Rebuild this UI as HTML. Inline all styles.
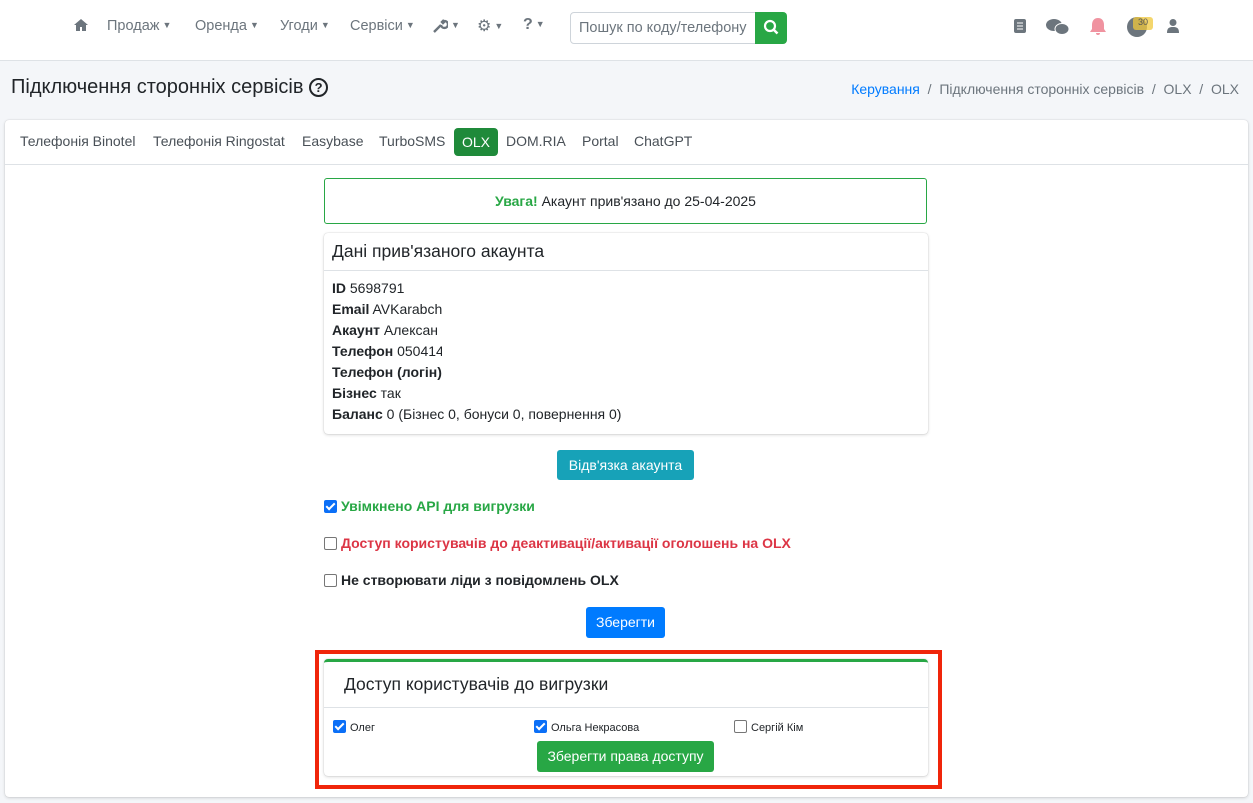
<!DOCTYPE html>
<html><head><meta charset="utf-8"><style>
*{box-sizing:border-box;margin:0;padding:0}
body{width:1253px;height:803px;overflow:hidden;background:#f4f6f9;font-family:"Liberation Sans",sans-serif;color:#212529;font-size:14px;position:relative}
.a{position:absolute}
.nav{left:0;top:0;width:1253px;height:61px;background:#fff;border-bottom:1px solid #dee2e6}
.ni{position:absolute;top:18px;color:#6c757d;font-size:14.5px}
.ni .c{font-size:9px;margin-left:3px;vertical-align:2px}
.card{left:5px;top:120px;width:1243px;height:677px;background:#fff;border-radius:4px;box-shadow:0 0 1px rgba(0,0,0,.2),0 1px 3px rgba(0,0,0,.15)}
.tab{position:absolute;top:133px;color:#495057;font-size:14px}
.chk{display:inline-block;width:13px;height:13px;border-radius:2px;vertical-align:-2px;margin-right:4px}
.on{background:#0b6ff7;position:relative}
.on:after{content:"";position:absolute;left:4px;top:1px;width:3px;height:7px;border:solid #fff;border-width:0 2px 2px 0;transform:rotate(45deg)}
.off{border:1px solid #767676;background:#fff}
b{font-weight:bold}
</style></head><body>
<div class="a nav">
<svg class="a" style="left:73px;top:18px" width="16" height="14" viewBox="0 0 16 14"><path d="M8 1L1 7h2v6h4V9h2v4h4V7h2z" fill="#6c757d"/></svg>
<span class="ni" style="left:107px">Продаж<span class="c">▼</span></span>
<span class="ni" style="left:195px">Оренда<span class="c">▼</span></span>
<span class="ni" style="left:280px">Угоди<span class="c">▼</span></span>
<span class="ni" style="left:350px">Сервіси<span class="c">▼</span></span>
<svg class="a" style="left:432px;top:18px" width="16" height="16"><path d="M2 14l7-7M9 7a3.5 3.5 0 104-4l-2 2-1-1 2-2" stroke="#6c757d" stroke-width="2.4" fill="none"/></svg>
<span class="ni" style="left:448px"><span class="c">▼</span></span>
<span class="ni" style="left:477px;font-size:16px;top:16px">⚙<span class="c">▼</span></span>
<span class="ni" style="left:523px;font-weight:bold;font-size:16px;top:16px">?<span class="c">▼</span></span>
<div class="a" style="left:570px;top:12px;width:186px;height:32px;border:1px solid #ced4da;border-radius:4px 0 0 4px;color:#6c757d;font-size:14.5px;padding:7px 8px">Пошук по коду/телефону</div>
<div class="a" style="left:755px;top:12px;width:32px;height:32px;background:#28a745;border-radius:0 4px 4px 0"><svg width="32" height="32"><circle cx="15" cy="14" r="5" stroke="#fff" stroke-width="2.2" fill="none"/><path d="M18.5 17.5l4 4" stroke="#fff" stroke-width="2.5"/></svg></div>
<svg class="a" style="left:1013px;top:18px" width="14" height="16"><rect x="1" y="1" width="12" height="14" rx="2" fill="#6c757d"/><path d="M4 5h6M4 8h6M4 11h6" stroke="#fff"/></svg>
<svg class="a" style="left:1045px;top:17px" width="26" height="20"><ellipse cx="9" cy="8" rx="8" ry="6" fill="#6c757d"/><ellipse cx="17" cy="12" rx="7" ry="5.5" fill="#6c757d" stroke="#fff"/></svg>
<svg class="a" style="left:1088px;top:16px" width="20" height="22"><path d="M10 2c-4 0-6 3-6 7v4l-2 3h16l-2-3V9c0-4-2-7-6-7z M8 17a2 2 0 004 0z" fill="#f093a0"/></svg>
<div class="a" style="left:1127px;top:17px;width:20px;height:20px;border-radius:50%;background:#6c757d"></div>
<div class="a" style="left:1133px;top:17px;width:20px;height:13px;background:rgba(240,200,60,.75);border-radius:3px;font-size:9px;color:#555;text-align:center">30</div>
<svg class="a" style="left:1166px;top:18px" width="14" height="16"><circle cx="7" cy="4.5" r="3.5" fill="#6c757d"/><path d="M1 15c0-5 2-6 6-6s6 1 6 6z" fill="#6c757d"/></svg>
</div>
<div class="a" style="left:11px;top:76px;font-size:20px;color:#212529">Підключення сторонніх сервісів <span style="display:inline-block;width:19px;height:19px;border:2px solid #212529;border-radius:50%;font-size:13px;text-align:center;line-height:15px;font-weight:bold;vertical-align:1px">?</span></div>
<div class="a" style="right:14px;top:81px;font-size:14px;color:#6c757d"><span style="color:#007bff">Керування</span> &nbsp;/&nbsp; Підключення сторонніх сервісів &nbsp;/&nbsp; OLX &nbsp;/&nbsp; OLX</div>
<div class="a card"></div>
<div class="a" style="left:5px;top:164px;width:1243px;border-top:1px solid #dee2e6"></div>
<span class="tab" style="left:20px">Телефонія Binotel</span>
<span class="tab" style="left:153px">Телефонія Ringostat</span>
<span class="tab" style="left:302px">Easybase</span>
<span class="tab" style="left:379px">TurboSMS</span>
<div class="a" style="left:454px;top:128px;width:44px;height:28px;background:#1f8a3a;border-radius:4px;color:#fff;text-align:center;line-height:28px">OLX</div>
<span class="tab" style="left:506px">DOM.RIA</span>
<span class="tab" style="left:582px">Portal</span>
<span class="tab" style="left:634px">ChatGPT</span>

<div class="a" style="left:324px;top:178px;width:603px;height:46px;border:1px solid #28a745;border-radius:3px;text-align:center;line-height:44px;font-size:14px"><b style="color:#28a745">Увага!</b> Акаунт прив'язано до 25-04-2025</div>
<div class="a" style="left:324px;top:233px;width:604px;height:201px;border-radius:4px;box-shadow:0 0 1px rgba(0,0,0,.25),0 1px 3px rgba(0,0,0,.15)">
<div style="height:38px;border-bottom:1px solid #dee2e6;font-size:17.5px;padding:8px 8px">Дані прив'язаного акаунта</div>
<div style="padding:7px 8px;line-height:21px;font-size:14px;width:118px;white-space:nowrap;overflow:visible">
<div style="width:110px;overflow:hidden"><b>ID</b> 5698791</div><div style="width:110px;overflow:hidden"><b>Email</b> AVKarabch</div><div style="width:110px;overflow:hidden"><b>Акаунт</b> Алексан</div><div style="width:110px;overflow:hidden"><b>Телефон</b> 050414</div><div style="width:110px;overflow:hidden"><b>Телефон (логін)</b></div><div><b>Бізнес</b> так</div><div><b>Баланс</b> 0 (Бізнес 0, бонуси 0, повернення 0)</div>
</div></div>
<div class="a" style="left:557px;top:450px;width:137px;height:30px;background:#17a2b8;border-radius:3px;color:#fff;text-align:center;line-height:30px">Відв'язка акаунта</div>
<div class="a" style="left:324px;top:498px;color:#28a745;font-weight:bold"><span class="chk on"></span>Увімкнено API для вигрузки</div>
<div class="a" style="left:324px;top:535px;color:#dc3545;font-weight:bold"><span class="chk off"></span>Доступ користувачів до деактивації/активації оголошень на OLX</div>
<div class="a" style="left:324px;top:572px;font-weight:bold"><span class="chk off"></span>Не створювати ліди з повідомлень OLX</div>
<div class="a" style="left:586px;top:607px;width:79px;height:31px;background:#007bff;border-radius:3px;color:#fff;text-align:center;line-height:31px">Зберегти</div>

<div class="a" style="left:315px;top:650px;width:627px;height:139px;border:4px solid #f0250a"></div>
<div class="a" style="left:324px;top:659px;width:604px;height:117px;border-radius:4px;border-top:3px solid #28a745;box-shadow:0 0 1px rgba(0,0,0,.25),0 1px 3px rgba(0,0,0,.15)">
<div style="height:46px;border-bottom:1px solid #dee2e6;font-size:17.5px;padding:12px 20px">Доступ користувачів до вигрузки</div>
<div class="a" style="left:9px;top:58px;font-size:11px"><span class="chk on"></span>Олег</div>
<div class="a" style="left:210px;top:58px;font-size:11px"><span class="chk on"></span>Ольга Некрасова</div>
<div class="a" style="left:410px;top:58px;font-size:11px"><span class="chk off"></span>Сергій Кім</div>
<div class="a" style="left:213px;top:79px;width:177px;height:31px;background:#28a745;border-radius:3px;color:#fff;text-align:center;line-height:31px">Зберегти права доступу</div>
</div>
</body></html>
